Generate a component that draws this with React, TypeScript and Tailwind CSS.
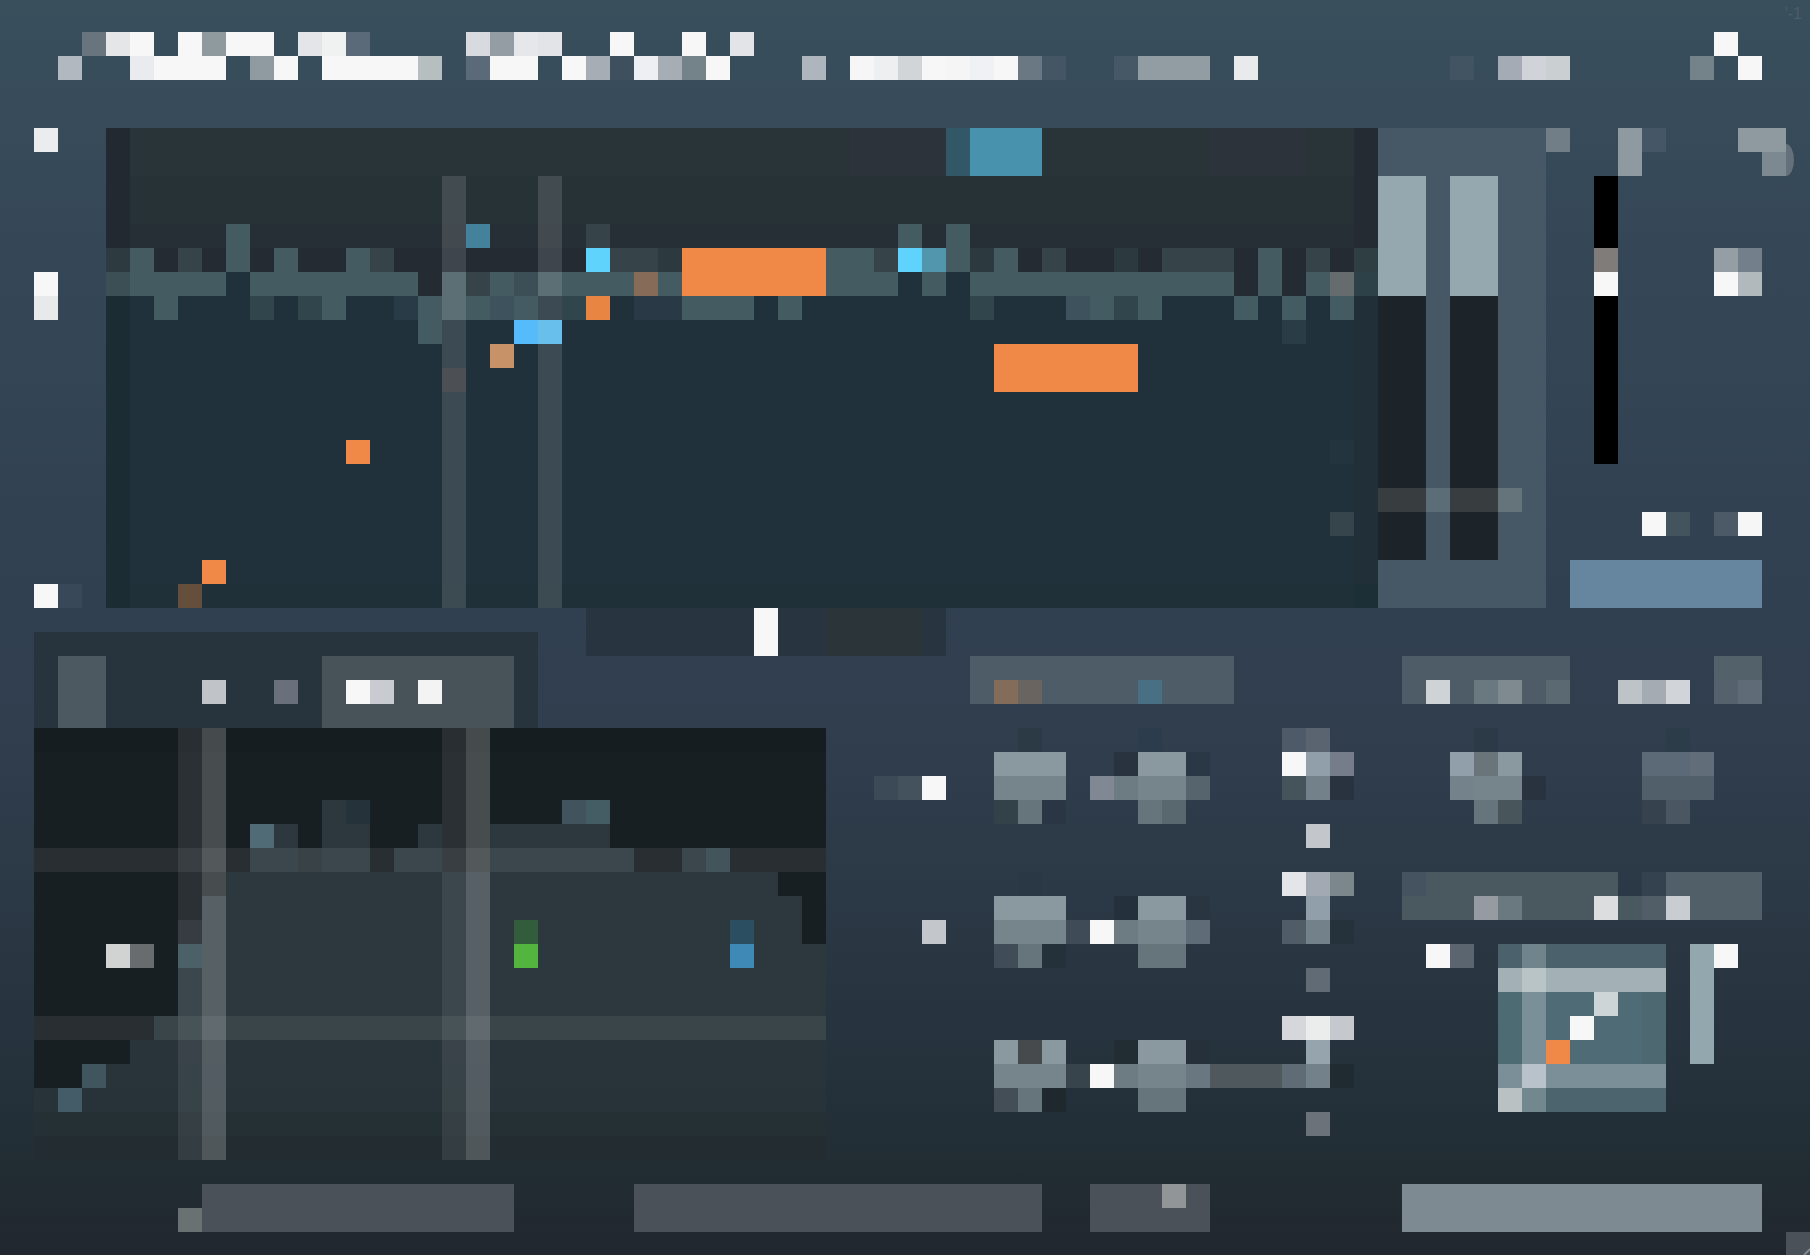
import { useState } from 'react';

// [col, row, cols, rows, colour], counted in 24px cells over the whole window
type Cell = [number, number, number, number, string];

interface MosaicProps {
    x: number;
    y: number;
    w: number;
    h: number;
    cells: Cell[];
    className?: string;
    label?: string;
}

const LIT = '#f7f7f7';
const ORANGE = '#f08848';
const WAVE = '#445b61';
const DIM = '#36444a';
const DEEP = '#21313b';
const KNOB = '#8a989f';
const KNOB_LOW = '#76858c';
const KNOB_FOOT = '#66747b';

function Mosaic({ x, y, w, h, cells, className, label }: MosaicProps) {
    return (
        <svg
            viewBox={`${x} ${y} ${w} ${h}`}
            preserveAspectRatio="none"
            shapeRendering="crispEdges"
            className={className}
            role={label ? 'img' : undefined}
            aria-label={label}
            aria-hidden={label ? undefined : true}
        >
            {cells.map(([cx, cy, cw, ch, fill], i) => (
                <rect key={i} x={cx} y={cy} width={cw} height={ch} fill={fill} />
            ))}
        </svg>
    );
}

const logo: Cell[] = [
    [3, 1, 1, 1, '#68757f'], [4, 1, 1, 1, '#e4e6e8'], [5, 1, 1, 1, LIT], [7, 1, 1, 1, LIT],
    [8, 1, 1, 1, '#8f9a9f'], [9, 1, 2, 1, LIT], [12, 1, 1, 1, '#e3e5e8'], [13, 1, 1, 1, '#f0f2f2'],
    [14, 1, 1, 1, '#5b6a78'], [19, 1, 1, 1, '#d7dbdf'], [20, 1, 1, 1, '#939da3'], [21, 1, 1, 1, '#e6e7ea'],
    [22, 1, 1, 1, '#e3e4e8'], [25, 1, 1, 1, LIT], [28, 1, 1, 1, LIT], [30, 1, 1, 1, '#e3e4e8'],
    [2, 2, 1, 1, '#b1b8bf'], [5, 2, 1, 1, '#e9ebee'], [6, 2, 3, 1, LIT], [10, 2, 1, 1, '#8f9aa1'],
    [11, 2, 1, 1, LIT], [13, 2, 4, 1, LIT], [17, 2, 1, 1, '#b7bec0'], [19, 2, 1, 1, '#5b6a78'],
    [20, 2, 2, 1, LIT], [23, 2, 1, 1, LIT], [24, 2, 1, 1, '#a7adb5'], [25, 2, 1, 1, '#3e505d'],
    [26, 2, 1, 1, '#eeeff2'], [27, 2, 1, 1, '#a7adb5'], [28, 2, 1, 1, '#74828a'], [29, 2, 1, 1, LIT],
];

const preset: Cell[] = [
    [33, 2, 1, 1, '#afb5bd'], [35, 2, 1, 1, '#f5f6f5'], [36, 2, 1, 1, '#eeeff1'], [37, 2, 1, 1, '#d1d5d8'],
    [38, 2, 1, 1, LIT], [39, 2, 1, 1, '#f5f5f5'], [40, 2, 1, 1, '#f0f1f5'], [41, 2, 1, 1, LIT],
    [42, 2, 1, 1, '#6a7883'], [43, 2, 1, 1, '#445563'], [46, 2, 1, 1, '#465766'], [47, 2, 3, 1, '#929da3'],
    [51, 2, 1, 1, '#e9eaec'],
];

const headerTools: Cell[] = [
    [60, 2, 1, 1, '#425361'], [62, 2, 1, 1, '#a4abb5'], [63, 2, 1, 1, '#d0d4d8'], [64, 2, 1, 1, '#cacfd2'],
    [70, 2, 1, 1, '#74828a'], [71, 1, 1, 1, LIT], [72, 2, 1, 1, LIT],
];

const axis: Cell[] = [
    [1, 5, 1, 1, '#ebecee'], [1, 11, 1, 1, LIT], [1, 12, 1, 1, '#e8e9eb'],
    [1, 24, 1, 1, LIT], [2, 24, 1, 1, '#384858'],
];

const waveform: Cell[] = [
    // backdrop, top to bottom
    [4, 5, 53, 2, '#293439'], [4, 7, 53, 2, '#273237'], [4, 9, 53, 1, '#272f36'],
    [4, 10, 53, 2, '#242b33'], [4, 12, 53, 12, DEEP], [4, 24, 53, 1, '#203038'],
    [4, 5, 1, 5, '#222930'], [4, 10, 1, 1, '#2d3a3f'], [4, 11, 1, 1, '#3c4f54'], [4, 12, 1, 13, '#1b2c32'],
    [56, 5, 1, 5, '#242b33'], [56, 10, 1, 1, '#2f3e43'], [56, 11, 1, 1, '#2d4248'],
    [56, 12, 1, 12, '#212f39'], [56, 24, 1, 1, '#1c2e36'],
    // mode switch
    [35, 5, 4, 2, '#2d333a'], [39, 5, 1, 2, '#325766'], [40, 5, 3, 2, '#4892ad'], [50, 5, 4, 2, '#2d333a'],
    // trace
    [9, 9, 1, 2, WAVE], [24, 9, 1, 1, DIM], [37, 9, 1, 1, WAVE], [39, 9, 1, 2, WAVE],
    [5, 10, 1, 1, WAVE], [7, 10, 1, 1, DIM], [11, 10, 1, 1, WAVE], [14, 10, 1, 1, WAVE], [15, 10, 1, 1, DIM],
    [25, 10, 2, 1, DIM], [27, 10, 1, 1, '#2c393e'], [34, 10, 2, 1, WAVE], [36, 10, 1, 1, DIM],
    [40, 10, 1, 1, '#2c393e'], [41, 10, 1, 1, WAVE], [43, 10, 1, 1, DIM], [46, 10, 1, 1, '#2c393e'],
    [48, 10, 3, 1, DIM], [52, 10, 1, 2, WAVE], [54, 10, 1, 1, DIM],
    [5, 11, 4, 1, WAVE], [9, 11, 1, 1, DEEP], [10, 11, 7, 1, WAVE], [18, 11, 1, 2, WAVE], [19, 11, 1, 1, DIM],
    [20, 11, 1, 1, WAVE], [21, 11, 1, 1, '#3c4f57'], [22, 11, 4, 1, WAVE], [26, 11, 1, 1, '#866c58'],
    [27, 11, 1, 1, WAVE], [34, 11, 3, 1, WAVE], [37, 11, 1, 1, DEEP], [38, 11, 1, 1, WAVE],
    [39, 11, 1, 1, DEEP], [40, 11, 11, 1, WAVE], [54, 11, 1, 1, WAVE], [55, 11, 1, 1, '#666c6e'],
    [6, 12, 1, 1, WAVE], [10, 12, 1, 1, '#31464c'], [12, 12, 1, 1, '#31464c'], [13, 12, 1, 1, WAVE],
    [16, 12, 1, 1, '#293b46'], [17, 12, 1, 2, WAVE], [19, 12, 1, 1, WAVE], [20, 12, 1, 1, '#3d525c'],
    [21, 12, 1, 1, WAVE], [23, 12, 1, 1, '#31464c'], [26, 12, 2, 1, '#293a46'], [28, 12, 3, 1, WAVE],
    [32, 12, 1, 1, WAVE], [40, 12, 1, 1, '#31464c'], [44, 12, 1, 1, '#3d525c'], [45, 12, 1, 1, WAVE],
    [46, 12, 1, 1, '#31464c'], [47, 12, 1, 1, WAVE], [51, 12, 1, 1, WAVE], [53, 12, 1, 1, WAVE],
    [55, 12, 1, 1, WAVE], [53, 13, 1, 1, '#2a3c46'], [55, 18, 1, 1, '#24343e'], [55, 21, 1, 1, '#36444b'],
    // cursors
    [18, 7, 1, 18, '#ffffff20'], [22, 7, 1, 18, '#ffffff20'], [18, 15, 1, 1, '#4c5054'],
    // markers
    [19, 9, 1, 1, '#44819a'], [24, 10, 1, 1, '#5fd3fb'], [37, 10, 1, 1, '#5fd3fb'], [38, 10, 1, 1, '#5296ae'],
    [21, 13, 1, 1, '#55bbfb'], [22, 13, 1, 1, '#68bfeb'], [20, 14, 1, 1, '#c79268'],
    [24, 12, 1, 1, '#e88542'], [28, 10, 6, 2, ORANGE], [41, 14, 6, 2, ORANGE],
    [14, 18, 1, 1, ORANGE], [8, 23, 1, 1, ORANGE], [7, 24, 1, 1, '#644e3c'],
];

const meters: Cell[] = [
    [57, 5, 7, 20, '#465866'], [57, 7, 2, 5, '#95a8af'], [60, 7, 2, 5, '#95a8af'],
    [57, 12, 2, 11, '#1c2329'], [60, 12, 2, 11, '#1c2329'], [57, 20, 2, 1, '#383e40'],
    [59, 20, 1, 1, '#5b6d77'], [60, 20, 2, 1, '#383e40'], [62, 20, 1, 1, '#65737a'],
];

const outputTop: Cell[] = [
    [64, 5, 1, 1, '#717e88'], [67, 5, 1, 2, '#8f9aa0'], [68, 5, 1, 1, '#455666'],
    [72, 5, 2, 1, '#8f9aa0'], [73, 6, 1, 1, '#7d8990'],
];

const outputReadout: Cell[] = [
    [71, 10, 1, 1, '#949ea4'], [72, 10, 1, 1, '#737f8a'], [71, 11, 1, 1, LIT], [72, 11, 1, 1, '#b1b9bd'],
];

const outputFoot: Cell[] = [
    [68, 21, 1, 1, LIT], [69, 21, 1, 1, '#43545f'], [71, 21, 1, 1, '#4c5a68'], [72, 21, 1, 1, '#f6f6f6'],
];

const spectrum: Cell[] = [
    [1, 30, 33, 1, '#161d20'], [1, 31, 33, 17, '#181f22'],
    // filled area, darker towards the floor
    [13, 33, 1, 1, '#2c383e'], [14, 33, 1, 1, '#263239'], [23, 33, 1, 1, '#41545e'], [24, 33, 1, 1, '#445d65'],
    [10, 34, 1, 1, '#506b76'], [11, 34, 1, 1, '#2c383e'], [13, 34, 2, 1, '#2c383e'], [17, 34, 1, 1, '#2c383e'],
    [20, 34, 5, 1, '#2c383e'],
    [10, 35, 2, 1, '#2d3a40'], [12, 35, 1, 1, '#29343a'], [13, 35, 2, 1, '#2d3a40'], [16, 35, 2, 1, '#2d3a40'],
    [20, 35, 6, 1, '#2d3a40'], [28, 35, 1, 1, '#2d3a40'], [29, 35, 1, 1, '#35494f'],
    [9, 36, 23, 1, '#2c383e'], [8, 37, 25, 2, '#2c383e'], [8, 39, 26, 1, '#2c383e'], [7, 40, 27, 2, '#2c383e'],
    [6, 42, 28, 1, '#2b373c'], [5, 43, 29, 1, '#29343a'], [3, 44, 31, 1, '#28333a'], [3, 44, 1, 1, '#40555e'],
    [1, 45, 33, 1, '#273338'], [2, 45, 1, 1, '#445c67'], [1, 46, 33, 1, '#253035'], [1, 47, 33, 1, '#232d31'],
    [7, 38, 1, 1, '#262c32'], [7, 39, 1, 1, '#3d535b'],
    // grid
    [1, 35, 33, 1, '#ffffff12'], [1, 42, 33, 1, '#ffffff12'],
    [7, 30, 1, 18, '#ffffff14'], [8, 30, 1, 18, '#ffffff34'],
    [18, 30, 1, 18, '#ffffff14'], [19, 30, 1, 18, '#ffffff34'],
    // handles
    [4, 39, 1, 1, '#d1d3d3'], [5, 39, 1, 1, '#686c6f'], [21, 38, 1, 1, '#325c3c'], [21, 39, 1, 1, '#53b43e'],
    [30, 38, 1, 1, '#2b4f61'], [30, 39, 1, 1, '#3e89b5'],
];

const knobs: Cell[] = [
    [42, 30, 1, 1, '#2c3a46'], [47, 30, 1, 1, '#2d3c4c'], [53, 30, 1, 1, '#4e5a67'], [54, 30, 1, 1, '#5a6470'],
    [41, 31, 3, 1, KNOB], [46, 31, 1, 1, '#29333f'], [47, 31, 2, 1, KNOB], [49, 31, 1, 1, '#2a3744'],
    [53, 31, 1, 1, LIT], [54, 31, 1, 1, '#909faa'], [55, 31, 1, 1, '#747d89'],
    [36, 32, 1, 1, '#3c4a58'], [37, 32, 1, 1, '#44525e'], [38, 32, 1, 1, LIT], [41, 32, 3, 1, KNOB_LOW],
    [45, 32, 1, 1, '#7f8893'], [46, 32, 1, 1, '#6d7c82'], [47, 32, 2, 1, KNOB_LOW], [49, 32, 1, 1, '#56656d'],
    [53, 32, 1, 1, '#45535b'], [54, 32, 1, 1, '#73828a'], [55, 32, 1, 1, '#29333f'],
    [41, 33, 1, 1, '#334148'], [42, 33, 1, 1, KNOB_FOOT], [43, 33, 1, 1, '#2a3643'], [47, 33, 1, 1, KNOB_FOOT],
    [48, 33, 1, 1, '#58686e'], [54, 34, 1, 1, '#c3c6ca'],

    [53, 36, 1, 1, '#e3e5e8'], [54, 36, 1, 1, '#a3a9b3'], [55, 36, 1, 1, '#7c878c'], [42, 36, 1, 1, '#2a3845'],
    [41, 37, 3, 1, KNOB], [46, 37, 1, 1, '#25303d'], [47, 37, 2, 1, KNOB], [49, 37, 1, 1, '#293541'],
    [54, 37, 1, 1, '#909faa'],
    [38, 38, 1, 1, '#c3c6cb'], [41, 38, 3, 1, KNOB_LOW], [44, 38, 1, 1, '#3f4b56'], [45, 38, 1, 1, LIT],
    [46, 38, 1, 1, '#6d7c82'], [47, 38, 2, 1, KNOB_LOW], [49, 38, 1, 1, '#5e6c77'], [53, 38, 1, 1, '#505c66'],
    [54, 38, 1, 1, '#73828a'], [55, 38, 1, 1, '#25323b'],
    [41, 39, 1, 1, '#404d56'], [42, 39, 1, 1, KNOB_FOOT], [43, 39, 1, 1, '#24313a'], [47, 39, 2, 1, KNOB_FOOT],
    [54, 40, 1, 1, '#616b75'],

    [53, 42, 1, 1, '#d5d7da'], [54, 42, 1, 1, '#ebedec'], [55, 42, 1, 1, '#c5c9ce'],
    [41, 43, 3, 1, KNOB], [42, 43, 1, 1, '#474a4d'], [46, 43, 1, 1, '#222c33'], [47, 43, 2, 1, KNOB],
    [49, 43, 1, 1, '#25303a'], [54, 43, 1, 1, '#95a4ad'],
    [41, 44, 3, 1, KNOB_LOW], [44, 44, 1, 1, '#38444c'], [45, 44, 1, 1, LIT], [46, 44, 1, 1, '#6d7c82'],
    [47, 44, 2, 1, KNOB_LOW], [49, 44, 1, 1, '#697780'], [50, 44, 3, 1, '#4e585d'], [53, 44, 1, 1, '#5f6b75'],
    [54, 44, 1, 1, '#73828a'], [55, 44, 1, 1, '#1f2a31'],
    [41, 45, 1, 1, '#434e57'], [42, 45, 1, 1, KNOB_FOOT], [43, 45, 1, 1, '#1f292d'], [47, 45, 2, 1, KNOB_FOOT],
    [54, 46, 1, 1, '#6b727a'],
];

const sideKnobs: Cell[] = [
    [61, 30, 1, 1, '#2c3a48'], [69, 30, 1, 1, '#2c3c48'],
    [60, 31, 1, 1, '#909faa'], [61, 31, 1, 1, '#6a747b'], [62, 31, 1, 1, KNOB],
    [68, 31, 2, 1, '#5c6976'], [70, 31, 1, 1, '#616e7a'],
    [60, 32, 1, 1, '#74838b'], [61, 32, 2, 1, KNOB_LOW], [63, 32, 1, 1, '#29333f'], [68, 32, 3, 1, '#515f6a'],
    [61, 33, 1, 1, KNOB_FOOT], [62, 33, 1, 1, '#48555a'], [68, 33, 1, 1, '#36434f'], [69, 33, 1, 1, '#4a5763'],
];

const pad: Cell[] = [
    [59, 39, 1, 1, LIT], [60, 39, 1, 1, '#5a6570'],
    [62, 39, 7, 7, '#4f6c76'], [62, 39, 7, 1, '#4b626d'], [62, 45, 7, 1, '#4b646d'],
    [62, 40, 1, 5, '#4d6b72'], [68, 40, 1, 5, '#4d6870'],
    [63, 39, 1, 1, '#6f848b'], [63, 41, 1, 3, '#7b8f99'], [63, 45, 1, 1, '#73888e'],
    [62, 40, 7, 1, '#a3b1b6'], [63, 40, 1, 1, '#b8c4c6'], [62, 44, 7, 1, '#7b8f99'], [63, 44, 1, 1, '#b9c1ca'],
    [62, 45, 1, 1, '#b9c1c2'], [66, 41, 1, 1, '#cdd5d7'], [65, 42, 1, 1, LIT], [64, 43, 1, 1, ORANGE],
    [70, 39, 1, 5, '#93a7af'], [71, 39, 1, 1, LIT],
];

function OutputPanel() {
    const [gain, setGain] = useState(70);

    return (
        <div className="flex w-60 shrink-0 flex-col">
            <div className="relative h-12">
                <Mosaic x={64} y={5} w={10} h={2} cells={outputTop} className="h-full w-full" />
                {/* rounded end of the help badge */}
                <span className="absolute top-4 left-full h-8 w-2 rounded-[0_100%_100%_0/0_50%_50%_0] bg-[#64717b]" />
            </div>
            <div className="flex h-72 pl-12">
                <input
                    type="range"
                    aria-label="Output gain"
                    min={0}
                    max={100}
                    value={gain}
                    onChange={(e) => setGain(Number(e.target.value))}
                    className="h-72 w-6 appearance-none bg-black [direction:rtl] [writing-mode:vertical-lr] [&::-webkit-slider-thumb]:h-12 [&::-webkit-slider-thumb]:w-6 [&::-webkit-slider-thumb]:appearance-none [&::-webkit-slider-thumb]:bg-linear-to-b [&::-webkit-slider-thumb]:from-[#7f7c7a] [&::-webkit-slider-thumb]:from-50% [&::-webkit-slider-thumb]:to-[#f7f7f7] [&::-webkit-slider-thumb]:to-50%"
                />
                <Mosaic x={71} y={10} w={2} h={2} cells={outputReadout} className="mt-18 ml-24 h-12 w-12" />
            </div>
            <Mosaic x={64} y={19} w={10} h={4} cells={outputFoot} className="h-24 w-full" />
            <button aria-label="Apply" className="ml-6 h-12 w-48 bg-[#66869f]" />
        </div>
    );
}

function SpectrumPanel() {
    return (
        <section className="min-w-0 flex-1">
            <div className="flex h-18 w-126 bg-[#27343e] pl-6">
                <button aria-label="Power" className="w-12 bg-[#4d5961]" />
                <button aria-label="First view" className="w-54">
                    <Mosaic x={4} y={27} w={9} h={3} cells={[[8, 28, 1, 1, '#c0c4c8'], [11, 28, 1, 1, '#6a707b']]} className="h-full w-full" />
                </button>
                <button aria-label="Second view" className="w-48 bg-[#475359]">
                    <Mosaic x={13} y={27} w={8} h={3} cells={[[14, 28, 1, 1, LIT], [15, 28, 1, 1, '#c8ccd0'], [17, 28, 1, 1, '#f3f3f3']]} className="h-full w-full" />
                </button>
            </div>
            <Mosaic x={1} y={30} w={33} h={18} cells={spectrum} className="h-108 w-full" label="Spectrum" />
        </section>
    );
}

function SidePanel() {
    return (
        <section className="w-96 shrink-0">
            <div className="flex h-12">
                <button aria-label="Type" className="w-42 bg-[#4e5c68]">
                    <Mosaic x={58} y={27} w={7} h={2} cells={[[59, 28, 1, 1, '#cfd3d5'], [61, 28, 1, 1, '#6a7880'], [62, 28, 1, 1, '#7f8a90'], [64, 28, 1, 1, '#5b6973']]} className="h-full w-full" />
                </button>
                <Mosaic x={65} y={27} w={6} h={2} cells={[[67, 28, 1, 1, '#bdc3c7'], [68, 28, 1, 1, '#a4abb3'], [69, 28, 1, 1, '#d1d4d8']]} className="h-full w-36" />
                <button aria-label="Sync" className="w-12 bg-[#53616b]">
                    <Mosaic x={71} y={27} w={2} h={2} cells={[[71, 28, 1, 1, '#55616d'], [72, 28, 1, 1, '#5f6c78']]} className="h-full w-full" />
                </button>
            </div>
            <Mosaic x={58} y={29} w={16} h={7} cells={sideKnobs} className="h-42 w-full" label="Side dials" />
            <div className="flex h-12">
                <button aria-label="Source" className="w-60">
                    <Mosaic
                        x={58} y={36} w={10} h={2}
                        cells={[[58, 36, 9, 1, '#4a5860'], [58, 37, 10, 1, '#4a5860'], [58, 36, 1, 1, '#455361'], [61, 37, 1, 1, '#959ba1'], [62, 37, 1, 1, '#6a787f'], [66, 37, 1, 1, '#dcdddf']]}
                        className="h-full w-full"
                    />
                </button>
                <button aria-label="Target" className="w-30">
                    <Mosaic
                        x={68} y={36} w={5} h={2}
                        cells={[[69, 36, 4, 2, '#515f68'], [68, 36, 1, 1, '#344250'], [68, 37, 1, 1, '#515d67'], [69, 37, 1, 1, '#c9cdd1']]}
                        className="h-full w-full"
                    />
                </button>
            </div>
            <Mosaic x={58} y={38} w={16} h={10} cells={pad} className="h-60 w-full" label="Transfer curve" />
        </section>
    );
}

export default function App() {
    return (
        <div className="relative min-h-screen overflow-hidden bg-[linear-gradient(to_bottom,#394f5c_0%,#364958_14%,#324252_38%,#303e4e_58%,#2b3845_72%,#243039_88%,#212c32_94%,#22272f_100%)] pt-8 pr-6 pb-5 pl-[34px] font-['Liberation_Sans',sans-serif]">
            <span className="absolute top-0.5 right-2 text-base text-[#4a5d69]">'-1</span>

            <header className="flex h-12">
                <Mosaic x={1} y={1} w={30} h={2} cells={logo} className="h-full w-180 shrink-0" label="Logo" />
                <button aria-label="Preset" className="ml-12 w-114">
                    <Mosaic x={33} y={1} w={19} h={2} cells={preset} className="h-full w-full" />
                </button>
                <Mosaic x={60} y={1} w={14} h={2} cells={headerTools} className="ml-auto h-full w-84 shrink-0" />
            </header>

            <main className="mt-12">
                <div className="flex h-120">
                    <Mosaic x={1} y={5} w={3} h={20} cells={axis} className="h-full w-18 shrink-0" />
                    <Mosaic x={4} y={5} w={53} h={20} cells={waveform} className="h-full min-w-0 flex-1" label="Waveform" />
                    <Mosaic x={57} y={5} w={7} h={20} cells={meters} className="h-full w-42 shrink-0" label="Level meters" />
                    <OutputPanel />
                </div>

                <div className="flex h-12 items-end">
                    <div className="h-6 w-126 bg-[#27343e]" />
                    <button aria-label="View mode" className="ml-12 h-12 w-90 bg-[#28343f]">
                        <Mosaic x={24} y={25} w={15} h={2} cells={[[31, 25, 1, 2, LIT], [34, 25, 4, 2, '#2b3439']]} className="h-full w-full" />
                    </button>
                </div>

                <div className="flex">
                    <SpectrumPanel />
                    <section className="w-144 shrink-0">
                        <button aria-label="Band" className="ml-36 block h-12 w-66 bg-[#4e5c68]">
                            <Mosaic x={40} y={27} w={11} h={2} cells={[[41, 28, 1, 1, '#846c5b'], [42, 28, 1, 1, '#6a6460'], [47, 28, 1, 1, '#486f84']]} className="h-full w-full" />
                        </button>
                        <Mosaic x={34} y={29} w={24} h={19} cells={knobs} className="h-114 w-full" label="Dials" />
                    </section>
                    <SidePanel />
                </div>
            </main>

            <footer className="mt-6 flex h-12 pr-6">
                <span className="ml-36 h-6 w-6 self-end bg-[#6a7172]" />
                <button aria-label="Undo" className="w-78 bg-[#4a5158]" />
                <button aria-label="Browse" className="ml-30 w-102 bg-[#4a5158]" />
                <button aria-label="Options" className="ml-12 w-30 bg-[#4a5158]">
                    <Mosaic x={45} y={49} w={5} h={2} cells={[[48, 49, 1, 1, '#919598']]} className="h-full w-full" />
                </button>
                <button aria-label="Save" className="ml-auto w-90 bg-[#7e8a91]" />
            </footer>

            <svg viewBox="0 0 24 24" className="absolute right-0 bottom-0 h-6 w-6" aria-hidden>
                <rect width="24" height="24" y="1" fill="#4a5158" />
                <path d="M18 24 L24 18" stroke="#7e8a91" strokeWidth="2" />
            </svg>
        </div>
    );
}
